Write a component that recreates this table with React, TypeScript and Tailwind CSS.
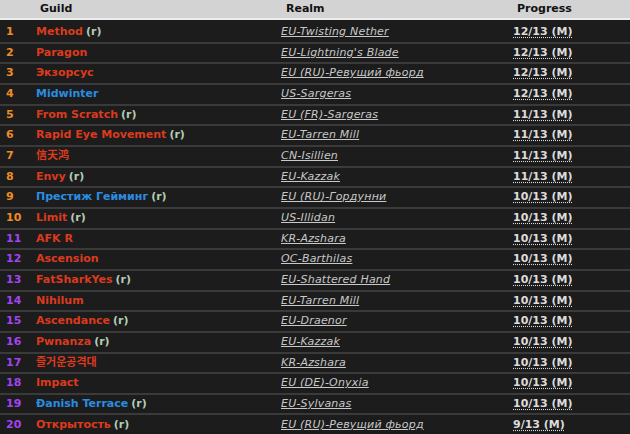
import React from "react";

type Faction = "horde" | "alliance";

interface Row {
  guild: string;
  faction: Faction;
  recruiting?: boolean;
  realm: string;
  progress: string;
}

const rows: Row[] = [
  { guild: "Method", faction: "horde", recruiting: true, realm: "EU-Twisting Nether", progress: "12/13 (M)" },
  { guild: "Paragon", faction: "horde", realm: "EU-Lightning's Blade", progress: "12/13 (M)" },
  { guild: "Экзорсус", faction: "horde", realm: "EU (RU)-Ревущий фьорд", progress: "12/13 (M)" },
  { guild: "Midwinter", faction: "alliance", realm: "US-Sargeras", progress: "12/13 (M)" },
  { guild: "From Scratch", faction: "horde", recruiting: true, realm: "EU (FR)-Sargeras", progress: "11/13 (M)" },
  { guild: "Rapid Eye Movement", faction: "horde", recruiting: true, realm: "EU-Tarren Mill", progress: "11/13 (M)" },
  { guild: "信天鸿", faction: "horde", realm: "CN-Isillien", progress: "11/13 (M)" },
  { guild: "Envy", faction: "horde", recruiting: true, realm: "EU-Kazzak", progress: "11/13 (M)" },
  { guild: "Престиж Гейминг", faction: "alliance", recruiting: true, realm: "EU (RU)-Гордунни", progress: "10/13 (M)" },
  { guild: "Limit", faction: "horde", recruiting: true, realm: "US-Illidan", progress: "10/13 (M)" },
  { guild: "AFK R", faction: "horde", realm: "KR-Azshara", progress: "10/13 (M)" },
  { guild: "Ascension", faction: "horde", realm: "OC-Barthilas", progress: "10/13 (M)" },
  { guild: "FatSharkYes", faction: "horde", recruiting: true, realm: "EU-Shattered Hand", progress: "10/13 (M)" },
  { guild: "Nihilum", faction: "horde", realm: "EU-Tarren Mill", progress: "10/13 (M)" },
  { guild: "Ascendance", faction: "horde", recruiting: true, realm: "EU-Draenor", progress: "10/13 (M)" },
  { guild: "Pwnanza", faction: "horde", recruiting: true, realm: "EU-Kazzak", progress: "10/13 (M)" },
  { guild: "즐거운공격대", faction: "horde", realm: "KR-Azshara", progress: "10/13 (M)" },
  { guild: "Impact", faction: "horde", realm: "EU (DE)-Onyxia", progress: "10/13 (M)" },
  { guild: "Ðanish Terrace", faction: "alliance", recruiting: true, realm: "EU-Sylvanas", progress: "10/13 (M)" },
  { guild: "Открытость", faction: "horde", recruiting: true, realm: "EU (RU)-Ревущий фьорд", progress: "9/13 (M)" },
];

const font = "font-['DejaVu_Sans','Noto_Sans_CJK_SC','Noto_Sans_CJK_KR',sans-serif]";

export default function App() {
  return (
    <div className={`w-[630px] h-[434px] overflow-hidden bg-[#1c1c1c] text-[11px] ${font}`}>
      {/* header */}
      <div className="flex h-[20px] items-center bg-[#d3d3d3] border-b-2 border-[#ededed] font-bold text-[#111]">
        <div className="w-[40px]" />
        <div className="w-[246px]">Guild</div>
        <div className="w-[231px]">Realm</div>
        <div>Progress</div>
      </div>

      <div className="pt-[3px]">
        {rows.map((r, i) => (
          <div
            key={i}
            className="flex h-[20.66px] items-center border-b-2 border-[#3a3a3a] box-border"
          >
            <div
              className={`w-[36px] pl-[6px] font-bold ${
                i < 10 ? "text-[#ec8c24]" : "text-[#a344ee]"
              }`}
            >
              {i + 1}
            </div>
            <div className="w-[245px] whitespace-nowrap">
              <span
                className={`font-bold ${
                  r.faction === "horde" ? "text-[#dc3a1c]" : "text-[#2a8de0]"
                }`}
              >
                {r.guild}
              </span>
              {r.recruiting && (
                <span className="ml-[3px] font-bold text-[#b4ccb4]">(r)</span>
              )}
            </div>
            <div className="w-[232px] italic underline text-[#c8c8c8] whitespace-nowrap tracking-[0.2px]">
              {r.realm}
            </div>
            <div className="font-bold text-[#dcdcdc] underline decoration-dotted underline-offset-2">
              {r.progress}
            </div>
          </div>
        ))}
      </div>
    </div>
  );
}
